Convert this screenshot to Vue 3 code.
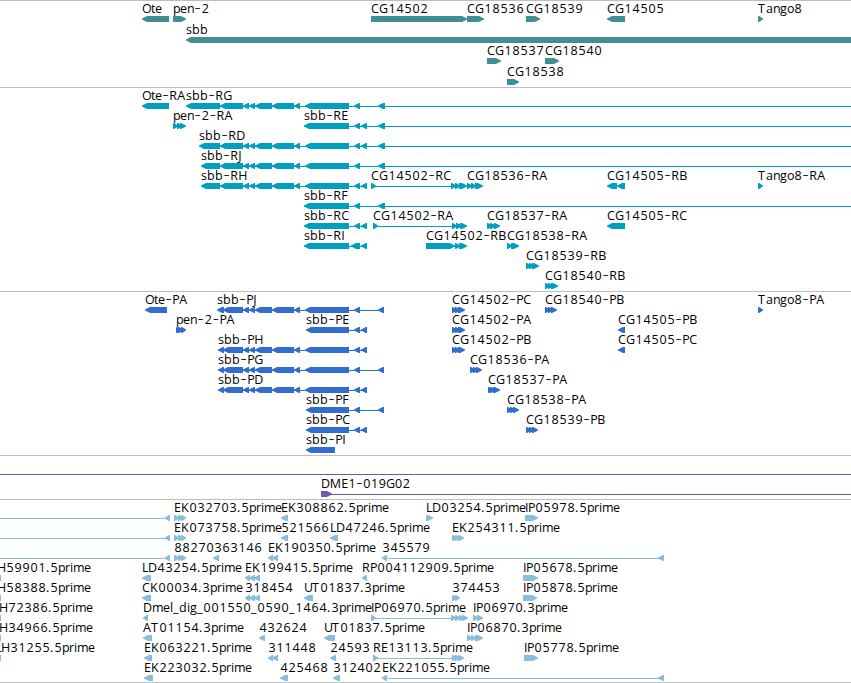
<script setup>
const DASH = '-'

// Horizontal advance of each label character, in pixels.
const ADVANCE = {
  A: 8, B: 7, C: 8, D: 9, E: 7, F: 7, G: 9, H: 9, I: 3, J: 4, K: 8, L: 6, M: 12,
  O: 9, P: 7, R: 8, T: 8, U: 8, a: 7, b: 8, d: 8, e: 7, g: 7, i: 3, l: 3, m: 11,
  n: 7, o: 7, p: 7, r: 5, s: 6, t: 4, '.': 4, _: 6, '-': 7.3,
}

const MID = '<220:243 <243:249 <249:255 <255:272 <272:294 <294:300 <305:349'
const TAIL_MID = '<223:243 <243:249 <249:255 <255:272 <272:294 <294:300 <305:349'
const EK = '-0:166 <165:170 >174:179 >178:183 >181:186'

// Labels are [text, x]; shapes are direction + start:end, "-" being a thin line.
const tracks = [
  {
    name: 'genes', pitch: 21,
    rows: [
      [[['Ote', 142], ['pen-2', 173], ['CG14502', 371], ['CG18536', 467], ['CG18539', 526], ['CG14505', 607], ['Tango8', 758]],
        '<142:169 >173:186 >371:467 >467:484 >526:540 <607:625 >758:763'],
      [[['sbb', 186]], '<186:860'],
      [[['CG18537', 487], ['CG18540', 545]], '>487:501 >545:559'],
      [[['CG18538', 507]], '>507:519'],
    ],
  },
  {
    name: 'transcripts', pitch: 20,
    rows: [
      [[['Ote-RA', 142], ['sbb-RG', 186]], `<142:169 -190:851 <186:220 ${MID} <354:360 <378:385`],
      [[['pen-2-RA', 173], ['sbb-RE', 304]], '>173:178 >177:182 >180:186 -310:851 <304:349 <354:360 <361:367 <378:385'],
      [[['sbb-RD', 199]], `-203:851 <199:220 ${MID} <354:360 <361:367 <378:385`],
      [[['sbb-RJ', 201]], `-205:851 <201:220 ${MID} <354:360 <378:385`],
      [[['sbb-RH', 201], ['CG14502-RC', 371], ['CG18536-RA', 467], ['CG14505-RB', 607], ['Tango8-RA', 758]],
        `-205:367 <201:220 ${MID} <354:360 <361:367 -372:452 >371:376 >451:456 >455:460 >459:467 >467:472 >471:476 >475:483 <607:617 <617:625 >758:763`],
      [[['sbb-RF', 304]], '-310:851 <304:349 <354:360 <378:385'],
      [[['sbb-RC', 304], ['CG14502-RA', 373], ['CG18537-RA', 487], ['CG14505-RC', 607]],
        '-310:367 <304:349 <354:360 <361:367 -374:453 >373:378 >452:457 >456:462 >460:467 >487:492 >490:496 >494:500 <607:625'],
      [[['sbb-RI', 304], ['CG14502-RB', 426], ['CG18538-RA', 507]],
        '-310:367 <304:349 <351:360 <361:367 -450:460 >426:455 >455:460 >459:467 >507:512 >511:519'],
      [[['CG18539-RB', 526]], '>526:531 >529:534 >532:539'],
      [[['CG18540-RB', 545]], '>545:550 >548:553 >551:558'],
    ],
  },
  {
    name: 'proteins', pitch: 20,
    rows: [
      [[['Ote-PA', 145], ['sbb-PJ', 217], ['CG14502-PC', 452], ['CG18540-PB', 545], ['Tango8-PA', 758]],
        `<145:167 -220:380 <217:224 ${TAIL_MID} <354:360 <378:384 >452:457 >455:460 >458:465 >545:550 >548:553 >551:557 >758:763`],
      [[['pen-2-PA', 176], ['sbb-PE', 306], ['CG14502-PA', 452], ['CG14505-PB', 618]],
        '>176:180 >178:183 >181:186 -312:367 <306:349 <354:360 <361:367 >452:457 >455:460 >458:465 <618:625'],
      [[['sbb-PH', 218], ['CG14502-PB', 452], ['CG14505-PC', 618]],
        `-220:367 <218:224 ${TAIL_MID} <354:360 <361:367 >452:457 >455:460 >458:465 <618:625`],
      [[['sbb-PG', 218], ['CG18536-PA', 470]], `-220:380 <218:224 ${TAIL_MID} <354:360 <378:384 >470:475 >473:478 >476:482`],
      [[['sbb-PD', 218], ['CG18537-PA', 488]], `-220:367 <218:224 ${TAIL_MID} <354:360 <361:367 >488:492 >490:495 >493:500`],
      [[['sbb-PF', 306], ['CG18538-PA', 507]], '-312:380 <306:349 <354:360 <378:384 >507:512 >510:515 >513:519'],
      [[['sbb-PC', 306], ['CG18539-PB', 526]], '-312:367 <306:349 <354:360 <361:367 >526:531 >529:534 >532:538'],
      [[['sbb-PI', 306]], '<306:335'],
    ],
  },
  {
    name: 'clones', pitch: 20,
    rows: [
      [[], '-0:851'],
      [[['DME1-019G02', 321, 0.965]], '-326:851 >321:332'],
    ],
  },
  {
    name: 'ests', pitch: 20,
    rows: [
      [[['EK032703.5prime', 174], ['EK308862.5prime', 281], ['LD03254.5prime', 426], ['IP05978.5prime', 525]],
        `${EK} <281:288 >426:433 >525:538`],
      [[['EK073758.5prime', 174], ['521566', 281], ['LD47246.5prime', 330], ['EK254311.5prime', 452]],
        `${EK} <281:288 <330:338 >452:457 >455:460 >458:464`],
      [[['88270363146', 174], ['EK190350.5prime', 268], ['345579', 382]],
        `${EK} <213:219 <268:273 <272:278 -386:660 <382:387 <658:664`],
      [[['H59901.5prime', -3], ['LD43254.5prime', 142], ['EK199415.5prime', 245], ['RP004112909.5prime', 362], ['IP05678.5prime', 523]],
        '=0:1 <142:151 <245:250 <249:255 <254:260 <362:367 >523:538'],
      [[['H58388.5prime', -3], ['CK00034.3prime', 142], ['318454', 245], ['UT01837.3prime', 304], ['374453', 452], ['IP05878.5prime', 523]],
        '=0:1 <142:151 <245:250 <249:255 <254:260 <304:313 >452:457 >455:460 >523:537'],
      [[['H72386.5prime', -1], ['Dmel_dig_001550_0590_1464.3prime', 143], ['IP06970.5prime', 371], ['IP06970.3prime', 473]],
        '=0:1 <143:148 -372:452 >371:376 >451:456 >455:460 >459:464 >462:468 >473:478 >477:483'],
      [[['H34966.5prime', -1], ['AT01154.3prime', 143], ['432624', 259], ['UT01837.5prime', 324], ['IP06870.3prime', 467]],
        '=0:1 <143:152 <259:265 <324:335 >467:472 >471:476 >475:483'],
      [[['LH31255.5prime', -5], ['EK063221.5prime', 144], ['311448', 268], ['24593', 330], ['RE13113.5prime', 373], ['IP05778.5prime', 524]],
        '=0:1 <144:152 <268:273 <272:278 <330:336 -374:453 >373:378 >452:457 >455:460 >458:464 >524:538'],
      [[['EK223032.5prime', 144], ['425468', 280], ['312402', 333], ['EK221055.5prime', 382]],
        '<144:153 <280:288 <333:340 -386:660 <382:387 <658:664'],
    ],
  },
]

function runs([text, start, scale = 1]) {
  const out = []
  let x = start
  for (const ch of text) {
    const dash = ch === DASH
    let last = out[out.length - 1]
    if (!last || last.dash !== dash) {
      last = { text: '', xs: [], dash }
      out.push(last)
    }
    last.text += ch
    last.xs.push(+(x + (dash || /\d/.test(ch) ? 0.5 : 0)).toFixed(1))
    x += (ADVANCE[ch] || 8) * scale
  }
  return out
}

function shapes(spec) {
  return spec.split(' ').map((s) => {
    const [a, b] = s.slice(1).split(':').map(Number)
    if (s[0] === '-') return `M${a} 18H${b}V19H${a}Z`
    if (s[0] === '=') return `M${a} 15H${b}V21H${a}Z`
    const tip = Math.min(6, b - a) - 1
    return s[0] === '<'
      ? `M${a} 18.6V17.4L${a + tip} 15H${b}V21H${a + tip}Z`
      : `M${b} 18.6V17.4L${b - tip} 15H${a}V21H${b - tip}Z`
  })
}
</script>

<template>
  <main class="browser">
    <section v-for="track in tracks" :key="track.name" class="track" :class="track.name">
      <svg v-for="(row, i) in track.rows" :key="i" class="row" width="851" :height="track.pitch">
        <path v-for="(d, j) in shapes(row[1])" :key="j" :d="d" />
        <text v-for="label in row[0]" :key="label[0]" class="label">
          <tspan
            v-for="(run, k) in runs(label)"
            :key="k"
            :x="run.xs.join(' ')"
            :y="run.dash ? 13 : 12"
            :class="{ dash: run.dash }"
          >{{ run.text }}</tspan>
        </text>
      </svg>
    </section>
  </main>
</template>

<style>
body {
  margin: 0;
  background: #fff;
}
</style>

<style scoped>
.browser {
  width: 851px;
  height: 683px;
  box-sizing: border-box;
  overflow: hidden;
  border-bottom: 1px solid #bebebe;
  background: #fff;
}
.track {
  display: flex;
  flex-direction: column;
  box-sizing: border-box;
  border-top: 1px solid #bebebe;
}
.row {
  display: block;
  flex: none;
  overflow: visible;
}
.genes { height: 87px; fill: #408f94; }
.transcripts { height: 204px; fill: #009fbf; }
.proteins { height: 164px; fill: #306dcd; }
.clones { height: 44px; fill: #7159a6; }
.ests { height: 183px; fill: #8abcdc; }
.label {
  fill: #000;
  font-family: "Open Sans", "Noto Sans", sans-serif;
  font-size: 12.5px;
}
.dash {
  font-size: 19px;
  font-weight: 300;
}
</style>
